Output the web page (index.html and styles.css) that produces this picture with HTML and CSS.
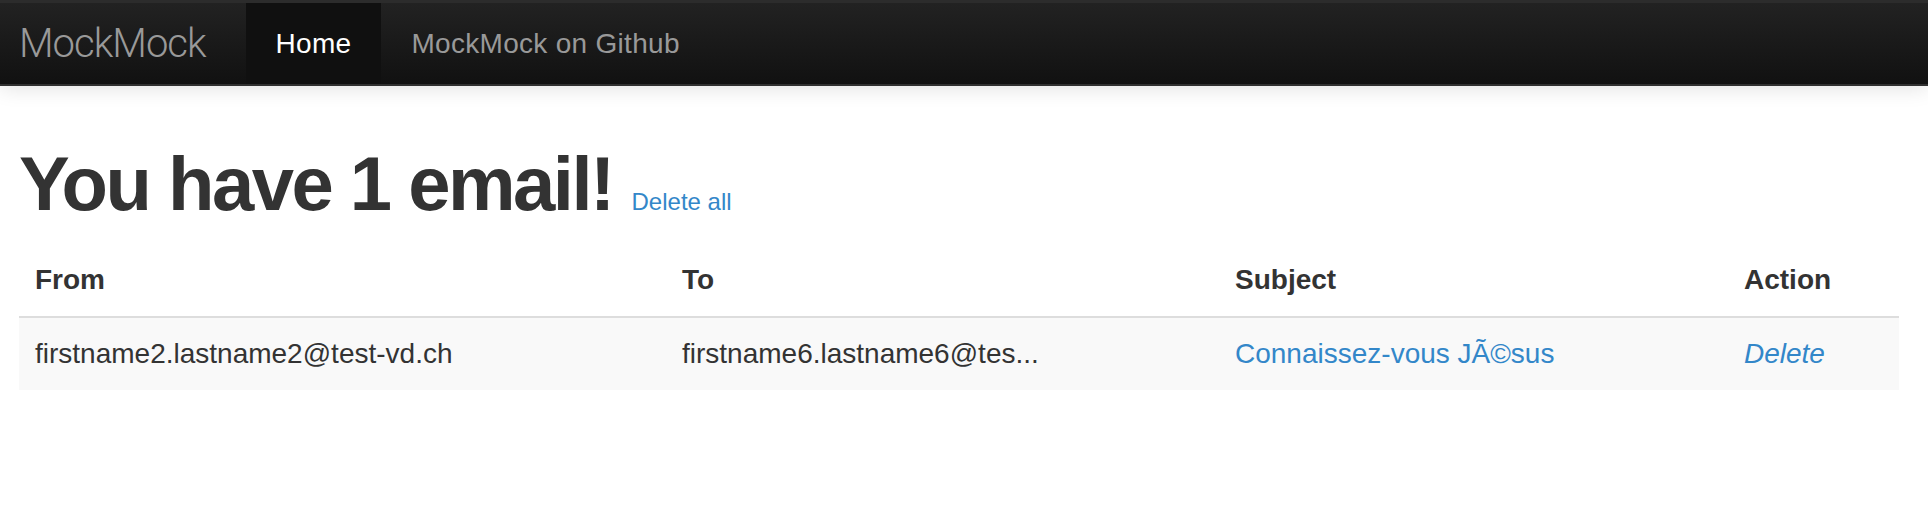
FILE: index.html
```html
<!DOCTYPE html>
<html lang="en">
<head>
<meta charset="utf-8">
<title>MockMock</title>
<link rel="stylesheet" href="styles.css">
</head>
<body>
<header class="navbar">
  <div class="navbar-inner">
    <a class="brand" href="#">MockMock</a>
    <nav class="nav">
      <a class="nav-item active" href="#">Home</a>
      <a class="nav-item" href="#">MockMock on Github</a>
    </nav>
  </div>
</header>
<main class="container">
  <h1 class="title">You have 1 email! <a class="delete-all" href="#">Delete all</a></h1>
  <table class="mail-table">
    <colgroup>
      <col class="col-from">
      <col class="col-to">
      <col class="col-subject">
      <col class="col-action">
    </colgroup>
    <thead>
      <tr>
        <th>From</th>
        <th>To</th>
        <th>Subject</th>
        <th>Action</th>
      </tr>
    </thead>
    <tbody>
      <tr class="striped">
        <td>firstname2.lastname2@test-vd.ch</td>
        <td>firstname6.lastname6@tes...</td>
        <td><a class="link" href="#">Connaissez-vous JÃ©sus</a></td>
        <td><a class="link delete" href="#">Delete</a></td>
      </tr>
    </tbody>
  </table>
</main>
</body>
</html>
```

FILE: styles.css
```css
* { box-sizing: border-box; }

html, body {
  margin: 0;
  padding: 0;
  background: #ffffff;
}

body {
  font-family: "Liberation Sans", Arial, sans-serif;
  font-size: 28px;
  line-height: 40px;
  color: #333333;
}

a { text-decoration: none; }

.navbar {
  border-top: 3px solid #2c2c2c;
  border-bottom: 2px solid #303030;
  box-shadow: 0 2px 20px rgba(0, 0, 0, 0.12);
  background: linear-gradient(to bottom, #222222, #111111);
}

.navbar-inner {
  display: flex;
  align-items: stretch;
  height: 81px;
}

.brand {
  display: flex;
  align-items: center;
  padding-left: 19px;
  margin-right: 40px;
  font-family: "Roboto", "Liberation Sans", sans-serif;
  font-weight: 300;
  font-size: 40px;
  letter-spacing: -1px;
  color: #999999;
}

.nav {
  display: flex;
  align-items: stretch;
}

.nav-item {
  display: flex;
  align-items: center;
  padding: 0 30px;
  font-size: 28px;
  letter-spacing: 0.3px;
  color: #999999;
}

.nav-item.active {
  background: #101010;
  color: #ffffff;
}

.container {
  margin-left: 19px;
  width: 1880px;
  padding-top: 38px;
}

.title {
  margin: 20px 0;
  font-size: 76px;
  line-height: 80px;
  font-weight: bold;
  letter-spacing: -2.5px;
  color: #333333;
}

.delete-all {
  font-size: 24px;
  line-height: 24px;
  font-weight: normal;
  letter-spacing: 0;
  color: #3387c9;
}

.mail-table {
  width: 1880px;
  border-collapse: collapse;
  table-layout: fixed;
}

.col-from { width: 647px; }
.col-to { width: 553px; }
.col-subject { width: 509px; }
.col-action { width: 171px; }

.mail-table th,
.mail-table td {
  text-align: left;
  padding: 16px;
  line-height: 40px;
  white-space: nowrap;
  overflow: hidden;
}

.mail-table th {
  font-weight: bold;
}

.mail-table td {
  border-top: 2px solid #dddddd;
}

.striped td {
  background: #f9f9f9;
}

.link {
  color: #3387c9;
}

.delete {
  font-style: italic;
}
```
